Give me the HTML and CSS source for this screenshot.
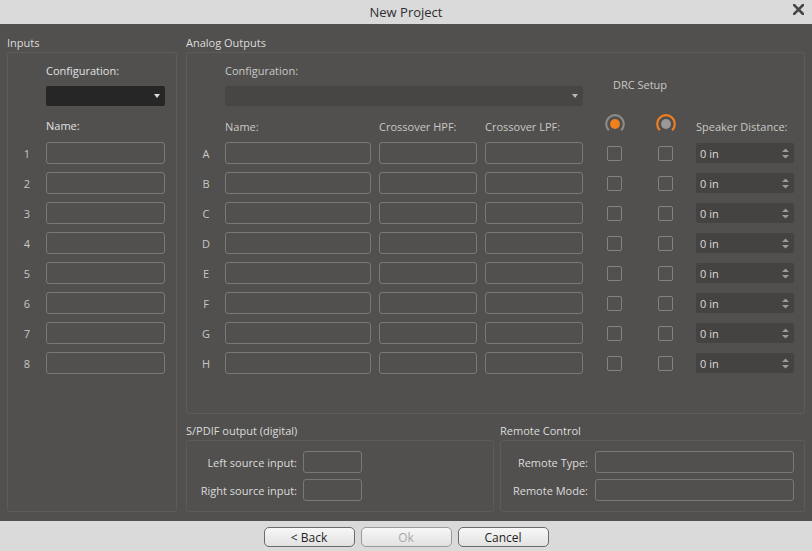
FILE: index.html
```html
<!DOCTYPE html>
<html>
<head>
<meta charset="utf-8">
<title>New Project</title>
<link rel="stylesheet" href="styles.css">
</head>
<body>
<div class="dialog">
  <header class="titlebar">
    <span class="title">New Project</span>
    <svg class="close" width="11" height="11" viewBox="0 0 11 11"><path d="M1 1 L10 10 M10 1 L1 10" stroke="#454545" stroke-width="2.6" stroke-linecap="square"/></svg>
  </header>

  <main class="main">
    <section class="col-left group">
      <div class="gtitle">Inputs</div>
      <div class="frame in-frame">
        <div class="head">Configuration:</div>
        <div class="combo-line"><div class="combo dark"><span class="tri"></span></div></div>
        <div class="head name-head">Name:</div>
        <div class="row"><span class="idx">1</span><div class="field in-field"></div></div>
        <div class="row"><span class="idx">2</span><div class="field in-field"></div></div>
        <div class="row"><span class="idx">3</span><div class="field in-field"></div></div>
        <div class="row"><span class="idx">4</span><div class="field in-field"></div></div>
        <div class="row"><span class="idx">5</span><div class="field in-field"></div></div>
        <div class="row"><span class="idx">6</span><div class="field in-field"></div></div>
        <div class="row"><span class="idx">7</span><div class="field in-field"></div></div>
        <div class="row"><span class="idx">8</span><div class="field in-field"></div></div>
      </div>
    </section>

    <div class="col-right">
      <section class="group">
        <div class="gtitle">Analog Outputs</div>
        <div class="frame out-frame">
          <div class="config-block">
            <div class="config-col">
              <div class="head dim">Configuration:</div>
              <div class="combo light"><span class="tri"></span></div>
            </div>
            <div class="drc dim">DRC Setup</div>
          </div>
          <div class="orow ohead dim">
            <span class="letter"></span>
            <span class="w-name">Name:</span>
            <span class="w-hpf">Crossover HPF:</span>
            <span class="w-lpf">Crossover LPF:</span>
            <span class="cell c1"><svg class="radio" width="20" height="20" viewBox="0 0 20 20"><path d="M3.8 16.2 A8.8 8.8 0 1 1 16.2 16.2" fill="none" stroke="#8c8b89" stroke-width="2.2"/><circle cx="10" cy="10" r="4.9" fill="#f07f1e"/></svg></span>
            <span class="cell c2"><svg class="radio" width="20" height="20" viewBox="0 0 20 20"><path d="M3.8 16.2 A8.8 8.8 0 1 1 16.2 16.2" fill="none" stroke="#f07f1e" stroke-width="2.2"/><circle cx="10" cy="10" r="4.9" fill="#9a9998"/></svg></span>
            <span class="w-spin">Speaker Distance:</span>
          </div>
          <div class="orow"><span class="letter">A</span><div class="field w-name"></div><div class="field w-hpf"></div><div class="field w-lpf"></div><span class="cell c1"><span class="chk"></span></span><span class="cell c2"><span class="chk"></span></span><div class="spin w-spin"><span>0 in</span><svg width="7" height="11" viewBox="0 0 7 11"><path d="M0 4 L3.5 0.5 L7 4 Z M0 7 L3.5 10.5 L7 7 Z" fill="#9b9a98"/></svg></div></div>
          <div class="orow"><span class="letter">B</span><div class="field w-name"></div><div class="field w-hpf"></div><div class="field w-lpf"></div><span class="cell c1"><span class="chk"></span></span><span class="cell c2"><span class="chk"></span></span><div class="spin w-spin"><span>0 in</span><svg width="7" height="11" viewBox="0 0 7 11"><path d="M0 4 L3.5 0.5 L7 4 Z M0 7 L3.5 10.5 L7 7 Z" fill="#9b9a98"/></svg></div></div>
          <div class="orow"><span class="letter">C</span><div class="field w-name"></div><div class="field w-hpf"></div><div class="field w-lpf"></div><span class="cell c1"><span class="chk"></span></span><span class="cell c2"><span class="chk"></span></span><div class="spin w-spin"><span>0 in</span><svg width="7" height="11" viewBox="0 0 7 11"><path d="M0 4 L3.5 0.5 L7 4 Z M0 7 L3.5 10.5 L7 7 Z" fill="#9b9a98"/></svg></div></div>
          <div class="orow"><span class="letter">D</span><div class="field w-name"></div><div class="field w-hpf"></div><div class="field w-lpf"></div><span class="cell c1"><span class="chk"></span></span><span class="cell c2"><span class="chk"></span></span><div class="spin w-spin"><span>0 in</span><svg width="7" height="11" viewBox="0 0 7 11"><path d="M0 4 L3.5 0.5 L7 4 Z M0 7 L3.5 10.5 L7 7 Z" fill="#9b9a98"/></svg></div></div>
          <div class="orow"><span class="letter">E</span><div class="field w-name"></div><div class="field w-hpf"></div><div class="field w-lpf"></div><span class="cell c1"><span class="chk"></span></span><span class="cell c2"><span class="chk"></span></span><div class="spin w-spin"><span>0 in</span><svg width="7" height="11" viewBox="0 0 7 11"><path d="M0 4 L3.5 0.5 L7 4 Z M0 7 L3.5 10.5 L7 7 Z" fill="#9b9a98"/></svg></div></div>
          <div class="orow"><span class="letter">F</span><div class="field w-name"></div><div class="field w-hpf"></div><div class="field w-lpf"></div><span class="cell c1"><span class="chk"></span></span><span class="cell c2"><span class="chk"></span></span><div class="spin w-spin"><span>0 in</span><svg width="7" height="11" viewBox="0 0 7 11"><path d="M0 4 L3.5 0.5 L7 4 Z M0 7 L3.5 10.5 L7 7 Z" fill="#9b9a98"/></svg></div></div>
          <div class="orow"><span class="letter">G</span><div class="field w-name"></div><div class="field w-hpf"></div><div class="field w-lpf"></div><span class="cell c1"><span class="chk"></span></span><span class="cell c2"><span class="chk"></span></span><div class="spin w-spin"><span>0 in</span><svg width="7" height="11" viewBox="0 0 7 11"><path d="M0 4 L3.5 0.5 L7 4 Z M0 7 L3.5 10.5 L7 7 Z" fill="#9b9a98"/></svg></div></div>
          <div class="orow"><span class="letter">H</span><div class="field w-name"></div><div class="field w-hpf"></div><div class="field w-lpf"></div><span class="cell c1"><span class="chk"></span></span><span class="cell c2"><span class="chk"></span></span><div class="spin w-spin"><span>0 in</span><svg width="7" height="11" viewBox="0 0 7 11"><path d="M0 4 L3.5 0.5 L7 4 Z M0 7 L3.5 10.5 L7 7 Z" fill="#9b9a98"/></svg></div></div>
        </div>
      </section>

      <div class="bottom">
        <section class="group">
          <div class="gtitle">S/PDIF output (digital)</div>
          <div class="frame bframe spdif">
            <span class="flabel">Left source input:</span><div class="field"></div>
            <span class="flabel">Right source input:</span><div class="field"></div>
          </div>
        </section>
        <section class="group">
          <div class="gtitle">Remote Control</div>
          <div class="frame bframe remote">
            <span class="flabel">Remote Type:</span><div class="field"></div>
            <span class="flabel">Remote Mode:</span><div class="field"></div>
          </div>
        </section>
      </div>
    </div>
  </main>

  <footer class="footer">
    <button class="btn">&lt; Back</button>
    <button class="btn disabled">Ok</button>
    <button class="btn">Cancel</button>
  </footer>
</div>
</body>
</html>
```

FILE: styles.css
```css
* { box-sizing: border-box; }
html, body { margin: 0; padding: 0; }
body {
  width: 812px;
  height: 551px;
  overflow: hidden;
  background: #51504e;
  color: #dedede;
  font-family: "Open Sans", "DejaVu Sans", sans-serif;
  font-size: 11px;
}
.dialog { display: flex; flex-direction: column; height: 551px; }

/* title bar */
.titlebar {
  height: 24px;
  background: #dadada;
  display: grid;
  grid-template-columns: 1fr auto 1fr;
  align-items: center;
}
.title { grid-column: 2; font-size: 13px; color: #2e2e2e; line-height: 20px; }
.close { grid-column: 3; justify-self: end; margin-right: 8px; margin-bottom: 5px; }

/* main */
.main { flex: 1; display: flex; gap: 9px; padding: 10px 7px 9px 7px; }
.col-left { width: 170px; display: flex; flex-direction: column; }
.col-right { flex: 1; display: flex; flex-direction: column; }
.gtitle { height: 18px; line-height: 18px; color: #dcdcdc; white-space: nowrap; }
.frame { border: 1px solid #5e5c5a; border-radius: 3px; }

.field {
  height: 22px;
  border: 1px solid #7a7876;
  border-radius: 3px;
}

.head { height: 15px; line-height: 15px; white-space: nowrap; }
.dim { color: #c9c8c6; }

.combo { height: 20px; border-radius: 2px; display: flex; align-items: center; justify-content: flex-end; padding-right: 5px; }
.combo.dark { background: #262626; width: 119px; }
.combo.light { background: #474644; margin-top: 8px; }
.tri { width: 0; height: 0; border-left: 3.5px solid transparent; border-right: 3.5px solid transparent; border-top: 4px solid #dcdcdc; }
.combo.light .tri { border-top-color: #b9b8b6; }

/* inputs */
.in-frame { flex: 1; padding-top: 10px; }
.in-frame .head { padding-left: 38px; color: #e2e2e2; }
.combo-line { margin-top: 8px; padding-left: 38px; }
.in-frame .name-head { height: 16px; line-height: 16px; margin-top: 12px; }
.row { display: flex; align-items: center; margin-top: 8px; height: 22px; }
.idx { width: 38px; text-align: center; color: #c8c7c5; }
.in-field { width: 119px; }

/* analog outputs */
.out-frame { height: 362px; padding-top: 10px; }
.config-block { display: flex; padding-left: 38px; }
.config-col { width: 358px; display: flex; flex-direction: column; }
.drc { width: 72px; margin-left: 21px; align-self: center; text-align: center; white-space: nowrap; }
.orow { display: flex; align-items: center; height: 22px; margin-top: 8px; white-space: nowrap; }
.orow.ohead { height: 16px; margin-top: 12px; }
.orow.ohead + .orow { margin-top: 8px; }
.letter { width: 38px; text-align: center; color: #c8c7c5; flex: none; }
.w-name { width: 146px; flex: none; }
.w-hpf { width: 98px; margin-left: 8px; flex: none; }
.w-lpf { width: 98px; margin-left: 8px; flex: none; }
.cell { width: 21px; display: flex; justify-content: center; align-items: center; flex: none; }
.c1 { margin-left: 21px; }
.c2 { margin-left: 30px; }
.radio { margin-bottom: 4px; flex: none; }
.chk { width: 15px; height: 15px; border: 1px solid #84827f; border-radius: 2px; }
.w-spin { width: 98px; margin-left: 20px; flex: none; }
.spin {
  height: 20px;
  background: #454341;
  border-radius: 2px;
  display: flex;
  align-items: center;
  justify-content: space-between;
  padding: 0 5px 0 4px;
  color: #dcdcdc;
}

/* bottom groups */
.bottom { display: grid; grid-template-columns: 308px 1fr; column-gap: 6px; margin-top: 8px; }
.bframe { height: 72px; padding-top: 10px; display: grid; row-gap: 6px; align-items: center; }
.flabel { text-align: right; white-space: nowrap; color: #dcdcdc; }
.spdif { grid-template-columns: 110px 59px; column-gap: 6px; grid-template-rows: 22px 22px; }
.remote { grid-template-columns: 87px 199px; column-gap: 7px; grid-template-rows: 22px 22px; }

/* footer */
.footer {
  height: 30px;
  background: #dadada;
  display: flex;
  justify-content: center;
  align-items: flex-start;
  gap: 6px;
  padding-top: 6px;
}
.btn {
  width: 91px;
  height: 20px;
  border: 1px solid #6a6a6a;
  border-radius: 5px;
  background: linear-gradient(#f7f7f7, #e2e2e2);
  font-family: "Open Sans", "DejaVu Sans", sans-serif;
  font-size: 12px;
  color: #1f1f1f;
  padding: 0;
  line-height: 17px;
}
.btn.disabled { color: #a8a8a8; border-color: #9a9a9a; }
```
